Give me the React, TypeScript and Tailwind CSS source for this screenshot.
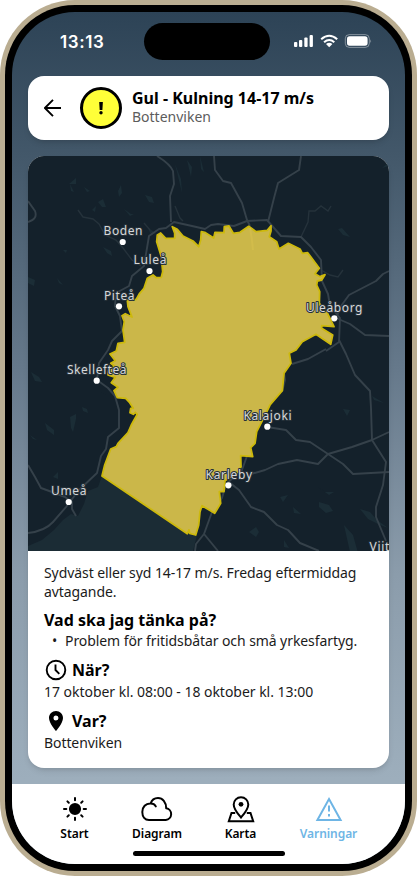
import React from "react";

const land = "M102 476L104.7 465 110.7 449 116.3 446.7 118 443.3 128 432.7 131.3 425 137.3 414.3 135.3 412.3 133.3 414.3 130 412.7 130.7 408.3 133.3 408.3 129.7 402.7 125.7 398.3 117.3 397.7 114 390.7 118 387.3 111.3 382.7 115.3 377.3 108 375 109 368 115.3 366.7 110.7 363.3 115.3 360.7 110 354 116.3 351 118 343.3 124.7 342.3 123 330 124.3 321.7 122 315.7 125.3 313.7 132 317 128 306.7 127.3 300 136.3 299.3 139.7 293.3 144 288.3 147.3 278.3 153 275 156.3 277.7 161.3 277.3 162.7 271.7 161.3 256.7 156.7 241.7 157.3 235 160.7 233 165.7 238.3 174.7 238.3 174.7 233.3 172.3 226.7 177.3 229.3 183 236 193 241 198.7 246.7 200.7 240 201.3 231.7 204.7 232.3 213.7 238 215 232.3 224 232.7 224.3 226.7 229 226 233.3 233.3 240 232.3 248.7 226.3 256 231.7 267.3 230.3 271 225.7 271 231 269.3 236.7 276.7 241.7 279 249 288.3 243.3 300 249 302.3 253.3 307.7 252.7 319.3 268.3 315 273.7 320 276.7 325 274.7 321.7 280 317.3 281 316.7 285 319.7 291.7 319.3 303.3 326.7 311.7 334 326.7 321.7 325.7 321.7 328.3 332.7 335 330.7 344.3 316 334.3 302.3 341.7 296 350 289.3 353.3 291 363.3 284 373.3 282.3 390.7 270 405 266 413.3 256.7 431.7 255 443.3 250.7 447.7 252.7 456.7 240.7 455.7 241 466.7 238.3 471.7 225 480.7 224 491.7 219.3 491.7 220.7 503.3 214.7 513.3 202 505.7 200 511.7 198.7 525 195.7 535 189.7 533.3 189 530 187.3 533.7Z";

const roads = [
  "M157 156Q170 164 173 171L174 184 170 196 171 222",
  "M28 201L35 211Q38 219 28 222",
  "M28 533Q45 531 53 522L66 507 79 490 97 473 101 456 106 449 108 437 119 428 119 410 115 396 108 388 97 380",
  "M28 465L35 477 41 488 52 492 65 497 72 502 72 509 76 516",
  "M97 380L99 363 108 350 112 341 122 331 120 316 115 306 116 293 129 286 132 276 144 266 149 236 159 229 166 228 174 222 192 226 205 229 211 225 218 224 234 226 247 221 267 220 281 236 301 237 311 247 321 260 322 281 328 294 330 306 340 318 339 342 326 351",
  "M214 156L215 170 223 181 231 183 242 203 247 220 250 226",
  "M301 156L299 170 278 183 274 198 268 222",
  "M389 271L383 274 376 281 349 295 341 306 336 318 350 324 365 335 389 336",
  "M339 340L346 354 355 375 370 391 371 408 372 440 386 462 383 485 376 507 376 517 386 541",
  "M326 349L308 359 292 364",
  "M284 373L285 380 282 392",
  "M251 474L265 470 278 464 297 460 318 464 328 454 352 447 372 440 389 432",
  "M267 427L286 430 296 440 310 442 328 454 343 464 353 474 389 472",
  "M229 482L239 490 251 507 264 512 277 525 288 530 300 543 319 551",
  "M195 551L196 544 204 534 212 512 222 498 226 484 242 470 247 456 253 440",
  "M204 534L218 551",
];

const minorRoads = "M78 210L83 217 93 219 99 224 105 235 116 240 123 248 132 260 141 266M175 206L180 218 183 221M144 223L150 230M301 237L308 222 309 211 315 211 321 206 328 211 331 206M321 270L330 275 338 277 343 270";

const terrain = [
  "M69 184l7-6v6zM70 184l4 8-3-1zM84 187l6 4-3 1zM98 202l5-3 3 8-4 0zM118 191l3-6 1 8-3 4zM145 195l7 2 2 6-5-1zM124 209l7 5 3 0-4 2zM92 210l4-4-1 6zM103 247l8 4 1 5-5-3zM57 278l6 7-4-2zM28 277l7 3-1 6-6-3zM148 228l8 5-5 2zM63 250l4 0-1 3z",
  "M175 164l6 15 1 14zM187 160l5 7-1 10zM200 156l4 16-3-3zM338 229l4-1 8 9-7-2zM382 168l7-6v4z",
  "M70 417l6-3v5l-3 13-2-4zM82 407l5 2 1 4-5-2zM45 423l9 7 0 5-7-5zM30 435l7 5-4-1zM31 372l8 5 3 5-7-1zM53 477l5-5v7zM98 391l8 4-6-3z",
  "M372 396l12 7-10-3zM343 409l7 1-3 6zM280 497l8-2-5 7zM293 507l8 7-7-1zM319 502l10 3 4 6-7 2-7-6zM318 487l7 5 9 0-5 3zM249 532l7-5 3 5-3 5zM344 525l9 10 5 18-8-1zM360 509l10 3 7 8 11 8-10-4-10-5zM284 540l5 8-5-1z",
];

const cities = [
  { name: "Boden", x: 103.5, y: 235, w: 39, cx: 122.7, cy: 242 },
  { name: "Luleå", x: 133.5, y: 264, w: 33, cx: 149.5, cy: 271 },
  { name: "Piteå", x: 104, y: 299.5, w: 30.5, cx: 119, cy: 306.3 },
  { name: "Skellefteå", x: 67, y: 374, w: 59.5, cx: 96.7, cy: 380.7 },
  { name: "Umeå", x: 51, y: 495, w: 35.5, cx: 68.7, cy: 502 },
  { name: "Uleåborg", x: 306, y: 311.5, w: 56.5, cx: 334.3, cy: 318.3 },
  { name: "Kalajoki", x: 243.5, y: 419.7, w: 48, cx: 267.3, cy: 426.7 },
  { name: "Karleby", x: 205.5, y: 478.5, w: 46.5, cx: 228.4, cy: 485.3 },
];

function WarningMap() {
  return (
    <svg viewBox="28 156 361 395" className="block h-[395px] w-[361px] shrink-0 bg-[#14212b]">
      <path d="M102 476L189 533 197 535 193 551H28V546L42 540 54 530 63 520 71 514 78 516 84 504 88 491 98 487Z" fill="#1b2c35" />
      <g fill="#1b2d36">{terrain.map((d) => <path key={d} d={d} />)}</g>
      <path d={minorRoads} fill="none" stroke="#25323b" strokeWidth="1.4" />
      <g fill="none" stroke="#35414a" strokeWidth="1.9" strokeLinejoin="round">
        {roads.map((d) => <path key={d} d={d} />)}
      </g>
      <path d={land} fill="#cbb749" stroke="#cdb90c" strokeWidth="1.8" strokeLinejoin="round" />
      <path d="M250 228Q252 238 253 250" stroke="#d2bc4b" strokeWidth="2" fill="none" />
      <g fontFamily="'Noto Sans', sans-serif" fontSize="12" fill="#d5d7d9" stroke="#263139" strokeWidth="2" strokeLinejoin="round" paintOrder="stroke">
        {cities.map((c) => <text key={c.name} x={c.x} y={c.y} textLength={c.w}>{c.name}</text>)}
        <text x="369.5" y="551" letterSpacing="0.7">Viit</text>
      </g>
      {cities.map((c) => <circle key={c.name} cx={c.cx} cy={c.cy} r="3.1" fill="white" />)}
    </svg>
  );
}

function StatusBar() {
  return (
    <div className="flex h-16 shrink-0 items-start justify-between pl-12 pr-[33px] pt-[20px] text-white">
      <span className="font-['Inter'] text-[17px] font-semibold leading-5 tracking-[0.6px]">13:13</span>
      <svg viewBox="0 0 79 16" className="mt-[2px] h-4 w-[79px]" fill="white">
        <rect x="1" y="8" width="3.3" height="5" rx="1" />
        <rect x="6" y="6" width="3.3" height="7" rx="1" />
        <rect x="11.3" y="3.4" width="3.3" height="9.6" rx="1" />
        <rect x="16.6" y="1" width="3.3" height="12" rx="1" />
        <g fill="none" stroke="white" strokeWidth="2.1">
          <path d="M28.2 5.2Q36.2-1.7 44.2 5.2" />
          <path d="M31.1 8.2Q36.2 3.8 41.3 8.2" />
        </g>
        <path d="M33 10Q36.2 7.5 39.4 10L36.2 13.2Z" />
        <rect x="52.3" y=".6" width="24" height="12.8" rx="4" fill="none" stroke="white" strokeOpacity=".4" />
        <rect x="54" y="2.3" width="20.6" height="9.4" rx="2.6" />
        <path d="M77.4 5.2q1.5 1.9 0 3.8Z" opacity=".5" />
      </svg>
    </div>
  );
}

function Header() {
  return (
    <header className="flex h-16 shrink-0 items-center rounded-2xl bg-white pl-4 shadow-md">
      <svg viewBox="0 0 18 18" className="h-[18px] w-[18px]" fill="none" stroke="black" strokeWidth="1.9">
        <path d="M17 9H1.2M9 .9L.9 9 9 17.1" />
      </svg>
      <div className="ml-[18px] flex h-[42px] w-[42px] items-center justify-center rounded-full border-[3px] border-black bg-[#ffff38]">
        <svg viewBox="0 0 6 14" className="h-3.5 w-1.5"><path d="M1.2 1h3.7l-.5 8H1.7z" /><circle cx="3" cy="11.8" r="1.7" /></svg>
      </div>
      <div className="-mt-0.5 ml-[10px]">
        <h1 className="text-base font-bold leading-[20px]">Gul - Kulning 14-17 m/s</h1>
        <p className="text-[14px] leading-[18px] text-[#5c5c5c]">Bottenviken</p>
      </div>
    </header>
  );
}

function Details() {
  return (
    <div className="px-4 pt-[12px] text-[14px] leading-[19px] text-[#1b1b1b]">
      <p className="tracking-[-0.08px]">Sydväst eller syd 14-17 m/s. Fredag eftermiddag avtagande.</p>
      <h2 className="mt-[8px] text-base font-bold leading-[22px] text-black">Vad ska jag tänka på?</h2>
      <ul className="flex"><li className="flex whitespace-nowrap tracking-[-0.08px]"><span className="w-[21px] pl-2">•</span>Problem för fritidsbåtar och små yrkesfartyg.</li></ul>
      <h2 className="mt-[9px] flex h-[22px] items-center gap-1 text-base font-bold text-black">
        <svg viewBox="0 0 24 24" className="h-6 w-6" fill="none" stroke="black" strokeWidth="1.9"><circle cx="12" cy="12" r="9.3" /><path d="M11.5 6.5V12l3.8 3.8" /></svg>
        När?
      </h2>
      <p className="mt-px tracking-[-0.03px]">17 oktober kl. 08:00 - 18 oktober kl. 13:00</p>
      <h2 className="mt-[9px] flex h-[22px] items-center gap-1 text-base font-bold text-black">
        <svg viewBox="0 0 24 24" className="h-6 w-6"><path d="M12 2C8.1 2 5 5.1 5 9c0 5.2 7 13 7 13s7-7.8 7-13c0-3.9-3.1-7-7-7zm0 9.5a2.5 2.5 0 110-5 2.5 2.5 0 010 5z" /></svg>
        Var?
      </h2>
      <p className="mt-px tracking-[-0.08px]">Bottenviken</p>
    </div>
  );
}

function Navigation() {
  return (
    <nav className="relative flex h-20 shrink-0 bg-white pl-5 pt-3 text-[12px] font-semibold leading-4 tracking-[-0.05px] text-black">
      <a className="flex w-[85px] flex-col items-center gap-0.5">
        <svg viewBox="0 0 28 28" className="h-7 w-7" stroke="black" strokeWidth="2" strokeLinecap="round"><circle cx="14" cy="13" r="5.1" /><path d="M14 2v2.3M14 21.7V24M3 13h2.3M22.7 13H25M6.4 5.4l1.4 1.4M20.2 19.2l1.4 1.4M6.4 20.6l1.4-1.4M20.2 6.8l1.4-1.4" /></svg>
        Start
      </a>
      <a className="flex w-[80px] flex-col items-center gap-0.5">
        <svg viewBox="0 0 32 28" className="h-7 w-8" fill="none" stroke="black" strokeWidth="2" strokeLinecap="round" strokeLinejoin="round"><path d="M7.5 24H24.8A5.9 5.9 0 0 0 25.2 12.3C25.2 6.2 21.6 2 17 2c-3.6 0-6.3 2.1-7.4 5.5C4.7 7.3 1.3 10.8 1.3 16c0 4.8 2.7 8 6.7 8M9.6 7.5c2.2 0 4.3 1.1 5.2 2.9" /></svg>
        Diagram
      </a>
      <a className="flex w-[87px] flex-col items-center gap-0.5">
        <svg viewBox="0 0 28 28" className="h-7 w-7" fill="none" stroke="black" strokeWidth="2"><path d="M14 21.5C10.4 17.3 6.7 13.2 6.7 8.5a7.3 7.3 0 0 1 14.6 0c0 4.7-3.7 8.8-7.3 13zM8.2 17H4.5L1.8 25.3h24.4L23.5 17h-3.7" /><circle cx="14" cy="8.3" r="2.4" fill="black" stroke="none" /></svg>
        Karta
      </a>
      <a className="flex w-[89px] flex-col items-center gap-0.5 text-[#6eb5e5]">
        <svg viewBox="0 0 28 28" className="h-7 w-7" fill="none" stroke="currentColor" strokeWidth="2"><path d="M14 3L25.6 24H2.4zM14 9.5v6M14 18v2.5" /></svg>
        Varningar
      </a>
      <div className="absolute bottom-2 left-[121px] h-[5px] w-[152px] rounded-full bg-black" />
    </nav>
  );
}

export default function App() {
  return (
    <main className="h-[876px] w-[417px] overflow-hidden rounded-[75px] bg-[#baad91] p-[5px] font-['Noto_Sans',sans-serif]">
      <div className="h-full rounded-[70px] bg-black p-[7px]">
        <div className="relative flex h-full flex-col overflow-hidden rounded-[63px] bg-[linear-gradient(180deg,#2d4356_0%,#43586a_17%,#66798b_42%,#8b9cab_66%,#9daebc_90%)]">
          <div className="absolute left-[132px] top-[11px] h-[37px] w-[126px] rounded-full bg-black" />
          <StatusBar />
          <div className="flex min-h-0 flex-1 flex-col gap-4 px-4 pb-4">
            <Header />
            <article className="flex h-[612px] flex-col overflow-hidden rounded-2xl bg-white shadow-md">
              <WarningMap />
              <Details />
            </article>
          </div>
          <Navigation />
        </div>
      </div>
    </main>
  );
}
